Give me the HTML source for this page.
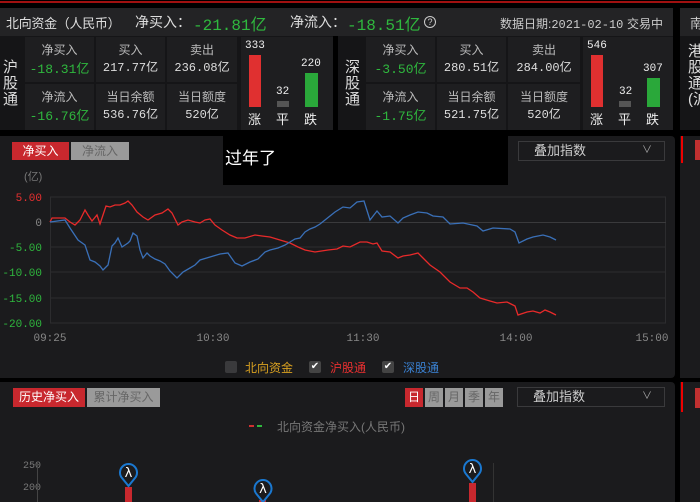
<!DOCTYPE html>
<html><head><meta charset="utf-8"><style>
*{margin:0;padding:0;box-sizing:border-box}
body{width:700px;height:502px;background:#000;overflow:hidden;position:relative;font-family:"Liberation Sans","Noto Sans CJK SC",sans-serif;color:#ccc}
.a{position:absolute}
.p{position:absolute;background:#1b1b1d}
.c{position:absolute;background:#1e1e20;text-align:center;font-size:12px;color:#bbb}
.g{color:#2fb83e}.r{color:#e83030}
.m{font-family:"Liberation Mono","Noto Sans CJK SC",monospace}
</style></head><body>
<div class="a" style="left:0;top:1px;width:700px;height:2px;background:#a01010"></div>
<div class="p" style="left:0;top:8px;width:673px;height:28px;background:#232325"></div>
<div class="a" style="left:6px;top:13px;font-size:13px;color:#ddd;letter-spacing:-0.3px">北向资金（人民币）</div>
<div class="a" style="left:135px;top:12px;font-size:14px;color:#ddd">净买入：</div>
<div class="a g m" style="left:193px;top:11px;font-size:16px">-21.81亿</div>
<div class="a" style="left:290px;top:12px;font-size:14px;color:#ddd">净流入：</div>
<div class="a g m" style="left:347px;top:11px;font-size:16px">-18.51亿</div>
<div class="a" style="left:424px;top:16px;width:12px;height:12px;border:1px solid #ccc;border-radius:50%;font-size:9px;text-align:center;line-height:10px">?</div>
<div class="a" style="left:500px;top:15px;font-size:12px;color:#ccc">数据日期:<span class="m">2021-02-10</span></div>
<div class="a" style="left:627px;top:15px;font-size:12px;color:#ccc">交易中</div>
<div class="p" style="left:680px;top:8px;width:20px;height:28px;background:#232325"></div>
<div class="a" style="left:690px;top:13px;font-size:13px;color:#ccc">南</div>

<div class="p" style="left:0;top:36px;width:333px;height:94px;background:#151517"></div>
<div class="p" style="left:338px;top:36px;width:335px;height:94px;background:#151517"></div>
<div class="p" style="left:680px;top:36px;width:20px;height:94px;background:#151517"></div>
<div class="a" style="left:3px;top:60px;font-size:15px;line-height:16px;color:#ddd;width:16px">沪<br>股<br>通</div>
<div class="a" style="left:345px;top:60px;font-size:15px;line-height:16px;color:#ddd;width:16px">深<br>股<br>通</div>
<div class="a" style="left:688px;top:44px;font-size:15px;line-height:16px;color:#ddd;width:16px">港<br>股<br>通<br>(沪</div>

<div class="c" style="left:25px;top:37px;width:69px;height:45px"><div style="margin-top:4px">净买入</div><div class="g m" style="font-size:13px">-18.31亿</div></div>
<div class="c" style="left:96px;top:37px;width:69px;height:45px"><div style="margin-top:4px">买入</div><div class="m" style="font-size:12px;color:#ddd">217.77亿</div></div>
<div class="c" style="left:167px;top:37px;width:70px;height:45px"><div style="margin-top:4px">卖出</div><div class="m" style="font-size:12px;color:#ddd">236.08亿</div></div>
<div class="c" style="left:25px;top:84px;width:69px;height:46px"><div style="margin-top:4px">净流入</div><div class="g m" style="font-size:13px">-16.76亿</div></div>
<div class="c" style="left:96px;top:84px;width:69px;height:46px"><div style="margin-top:4px">当日余额</div><div class="m" style="font-size:12px;color:#ddd">536.76亿</div></div>
<div class="c" style="left:167px;top:84px;width:70px;height:46px"><div style="margin-top:4px">当日额度</div><div class="m" style="font-size:12px;color:#ddd">520亿</div></div>
<div class="c" style="left:241px;top:37px;width:92px;height:93px"></div>

<div class="c" style="left:366px;top:37px;width:69px;height:45px"><div style="margin-top:4px">净买入</div><div class="g m" style="font-size:13px">-3.50亿</div></div>
<div class="c" style="left:437px;top:37px;width:69px;height:45px"><div style="margin-top:4px">买入</div><div class="m" style="font-size:12px;color:#ddd">280.51亿</div></div>
<div class="c" style="left:508px;top:37px;width:72px;height:45px"><div style="margin-top:4px">卖出</div><div class="m" style="font-size:12px;color:#ddd">284.00亿</div></div>
<div class="c" style="left:366px;top:84px;width:69px;height:46px"><div style="margin-top:4px">净流入</div><div class="g m" style="font-size:13px">-1.75亿</div></div>
<div class="c" style="left:437px;top:84px;width:69px;height:46px"><div style="margin-top:4px">当日余额</div><div class="m" style="font-size:12px;color:#ddd">521.75亿</div></div>
<div class="c" style="left:508px;top:84px;width:72px;height:46px"><div style="margin-top:4px">当日额度</div><div class="m" style="font-size:12px;color:#ddd">520亿</div></div>
<div class="c" style="left:583px;top:37px;width:90px;height:93px"></div>

<div class="a m" style="left:245px;top:40px;font-size:11px;color:#eee">333</div>
<div class="a" style="left:249px;top:55px;width:12px;height:52px;background:#e03030"></div>
<div class="a m" style="left:276px;top:86px;font-size:11px;color:#eee">32</div>
<div class="a" style="left:277px;top:101px;width:12px;height:6px;background:#555"></div>
<div class="a m" style="left:301px;top:58px;font-size:11px;color:#eee">220</div>
<div class="a" style="left:305px;top:73px;width:13px;height:34px;background:#2aa83a"></div>
<div class="a" style="left:248px;top:109px;font-size:13px;color:#eee">涨</div>
<div class="a" style="left:276px;top:109px;font-size:13px;color:#eee">平</div>
<div class="a" style="left:304px;top:109px;font-size:13px;color:#eee">跌</div>
<div class="a m" style="left:587px;top:40px;font-size:11px;color:#eee">546</div>
<div class="a" style="left:591px;top:55px;width:12px;height:52px;background:#e03030"></div>
<div class="a m" style="left:619px;top:86px;font-size:11px;color:#eee">32</div>
<div class="a" style="left:619px;top:101px;width:12px;height:6px;background:#555"></div>
<div class="a m" style="left:643px;top:63px;font-size:11px;color:#eee">307</div>
<div class="a" style="left:647px;top:78px;width:13px;height:29px;background:#2aa83a"></div>
<div class="a" style="left:590px;top:109px;font-size:13px;color:#eee">涨</div>
<div class="a" style="left:618px;top:109px;font-size:13px;color:#eee">平</div>
<div class="a" style="left:646px;top:109px;font-size:13px;color:#eee">跌</div>

<div class="p" style="left:0;top:136px;width:675px;height:242px;border-radius:0 4px 4px 0"></div>
<div class="p" style="left:680px;top:136px;width:20px;height:242px"></div>
<div class="a" style="left:681px;top:136px;width:2px;height:27px;background:#e00"></div>
<div class="a" style="left:695px;top:140px;width:5px;height:20px;background:#c03030"></div>
<div class="a" style="left:12px;top:142px;width:57px;height:18px;background:#c8282e;color:#fff;font-size:12px;text-align:center;line-height:18px">净买入</div>
<div class="a" style="left:71px;top:142px;width:58px;height:18px;background:#9a9a9a;color:#666;font-size:12px;text-align:center;line-height:18px">净流入</div>
<div class="a" style="left:223px;top:136px;width:285px;height:49px;background:#000"></div>
<div class="a" style="left:225px;top:144px;font-size:17px;color:#fff">过年了</div>
<div class="a" style="left:518px;top:141px;width:147px;height:20px;border:1px solid #3a3a3c;background:#1b1b1d;font-size:13px;color:#ccc;line-height:18px;padding-left:15px">叠加指数<span style="position:absolute;right:12px;font-size:10px;color:#aaa">∨</span></div>
<div class="a" style="left:24px;top:168px;font-size:11px;color:#777">(亿)</div>

<svg class="a" style="left:0;top:136px" width="675" height="242" viewBox="0 136 675 242">
<g stroke="#2c2c2e" stroke-width="1">
<line x1="50" y1="197" x2="666" y2="197"/><line x1="50" y1="247" x2="666" y2="247"/><line x1="50" y1="272" x2="666" y2="272"/><line x1="50" y1="298" x2="666" y2="298"/>
<line x1="50.5" y1="197" x2="50.5" y2="323"/><line x1="665.5" y1="197" x2="665.5" y2="323"/><line x1="50" y1="323" x2="666" y2="323"/>
</g>
<line x1="50" y1="222.5" x2="666" y2="222.5" stroke="#3a3a3c"/>
<g font-family="Liberation Mono,monospace" font-size="11" text-anchor="end">
<text x="42" y="201" fill="#e83030">5.00</text>
<text x="42" y="226" fill="#888">0</text>
<text x="42" y="251" fill="#2fb83e">-5.00</text>
<text x="42" y="276" fill="#2fb83e">-10.00</text>
<text x="42" y="302" fill="#2fb83e">-15.00</text>
<text x="42" y="327" fill="#2fb83e">-20.00</text>
</g>
<g font-family="Liberation Mono,monospace" font-size="11" fill="#888" text-anchor="middle">
<text x="50" y="341">09:25</text><text x="213" y="341">10:30</text><text x="363" y="341">11:30</text><text x="516" y="341">14:00</text><text x="652" y="341">15:00</text>
</g>
<polyline fill="none" stroke="#e82a2a" stroke-width="1.3" points="50,222 52,218 65,218 70,222 75,225 80,220 85,210 88,215 92,221 97,215 100,224 103,215 106,206 110,207 115,205 120,205 125,203 128,201 132,205 137,212 143,217 148,220 155,215 162,213 168,209 172,213 178,225 182,222 188,220 195,222 200,223 205,220 210,219 215,225 222,230 230,235 237,238 245,238 255,235 262,236 270,237 280,240 290,243 298,247 305,250 315,252 328,250 337,249 343,246 350,247 360,242 367,242 373,244 377,243 382,251 390,252 398,258 403,256 410,255 418,253 423,258 430,265 440,272 450,282 460,288 467,288 473,292 480,298 490,301 497,303 507,302 515,306 518,315 527,312 533,311 540,313 545,310 550,312 556,315"/>
<polyline fill="none" stroke="#3a70b8" stroke-width="1.3" points="50,222 65,220 70,228 78,240 85,245 90,260 95,262 100,266 103,270 108,265 112,246 115,243 118,238 122,247 128,243 130,241 133,233 137,236 140,250 143,258 147,253 150,256 155,259 160,261 165,264 170,271 177,278 183,272 190,268 195,265 200,260 210,257 220,254 228,253 235,263 242,266 250,262 258,259 265,252 270,250 278,248 285,245 290,242 295,239 300,238 305,232 310,229 315,227 320,224 325,220 330,216 335,212 343,207 350,208 357,202 364,201 370,220 377,211 382,217 390,216 398,223 403,218 410,215 418,212 427,213 433,216 443,217 450,224 463,223 477,226 483,231 493,228 510,229 515,232 519,243 527,239 533,237 543,235 550,237 556,240"/>
</svg>
<div class="a" style="left:225px;top:361px;width:12px;height:12px;background:#3a3a3c;border-radius:2px"></div>
<div class="a" style="left:245px;top:359px;font-size:12px;color:#d8a020">北向资金</div>
<div class="a" style="left:309px;top:361px;width:12px;height:12px;background:#444;border-radius:2px;color:#fff;font-size:10px;line-height:12px;text-align:center">✔</div>
<div class="a" style="left:330px;top:359px;font-size:12px;color:#e83030">沪股通</div>
<div class="a" style="left:382px;top:361px;width:12px;height:12px;background:#444;border-radius:2px;color:#fff;font-size:10px;line-height:12px;text-align:center">✔</div>
<div class="a" style="left:403px;top:359px;font-size:12px;color:#3a80d0">深股通</div>

<div class="p" style="left:0;top:382px;width:675px;height:120px;border-radius:0 4px 0 0"></div>
<div class="p" style="left:680px;top:382px;width:20px;height:120px"></div>
<div class="a" style="left:681px;top:382px;width:2px;height:30px;background:#e00"></div>
<div class="a" style="left:695px;top:388px;width:5px;height:20px;background:#c03030"></div>
<div class="a" style="left:13px;top:388px;width:72px;height:19px;background:#c8282e;color:#fff;font-size:12px;text-align:center;line-height:19px">历史净买入</div>
<div class="a" style="left:87px;top:388px;width:73px;height:19px;background:#9a9a9a;color:#666;font-size:12px;text-align:center;line-height:19px">累计净买入</div>
<div class="a" style="left:405px;top:388px;width:18px;height:19px;background:#c8282e;color:#fff;font-size:12px;text-align:center;line-height:19px">日</div>
<div class="a" style="left:425px;top:388px;width:18px;height:19px;background:#9a9a9a;color:#666;font-size:12px;text-align:center;line-height:19px">周</div>
<div class="a" style="left:445px;top:388px;width:18px;height:19px;background:#9a9a9a;color:#666;font-size:12px;text-align:center;line-height:19px">月</div>
<div class="a" style="left:465px;top:388px;width:18px;height:19px;background:#9a9a9a;color:#666;font-size:12px;text-align:center;line-height:19px">季</div>
<div class="a" style="left:485px;top:388px;width:18px;height:19px;background:#9a9a9a;color:#666;font-size:12px;text-align:center;line-height:19px">年</div>
<div class="a" style="left:517px;top:387px;width:148px;height:20px;border:1px solid #3a3a3c;font-size:13px;color:#ccc;line-height:18px;padding-left:15px">叠加指数<span style="position:absolute;right:12px;font-size:10px;color:#aaa">∨</span></div>
<div class="a" style="left:249px;top:425px;width:5px;height:2px;background:#d03030"></div>
<div class="a" style="left:257px;top:425px;width:5px;height:2px;background:#2fb83e"></div>
<div class="a" style="left:277px;top:418px;font-size:12px;color:#777">北向资金净买入(人民币)</div>
<svg class="a" style="left:0;top:440px" width="675" height="62" viewBox="0 440 675 62">
<g font-family="Liberation Mono,monospace" font-size="10" fill="#777" text-anchor="end"><text x="41" y="468">250</text><text x="41" y="490">200</text></g>
<line x1="37.5" y1="463" x2="37.5" y2="502" stroke="#444"/><line x1="34" y1="464.5" x2="37" y2="464.5" stroke="#444"/><line x1="34" y1="486.5" x2="37" y2="486.5" stroke="#444"/>
<line x1="493.5" y1="463" x2="493.5" y2="502" stroke="#333"/>
<rect x="125" y="487" width="7" height="15" fill="#c8282e"/>
<rect x="469" y="483" width="7" height="19" fill="#c8282e"/>
<rect x="259" y="500" width="7" height="2" fill="#c8282e"/>
<g fill="none" stroke="#1a78d0" stroke-width="2">
<path d="M128.5 486 L122 478 A8.5 8.5 0 1 1 135 478 Z"/>
<path d="M263 502 L256.5 494 A8.5 8.5 0 1 1 269.5 494 Z"/>
<path d="M472.5 482 L466 474 A8.5 8.5 0 1 1 479 474 Z"/>
</g>
<g fill="#fff" font-family="DejaVu Sans,sans-serif" font-size="13" text-anchor="middle"><text x="128.5" y="477">λ</text><text x="263" y="493">λ</text><text x="472.5" y="473">λ</text></g>
</svg>
</body></html>
